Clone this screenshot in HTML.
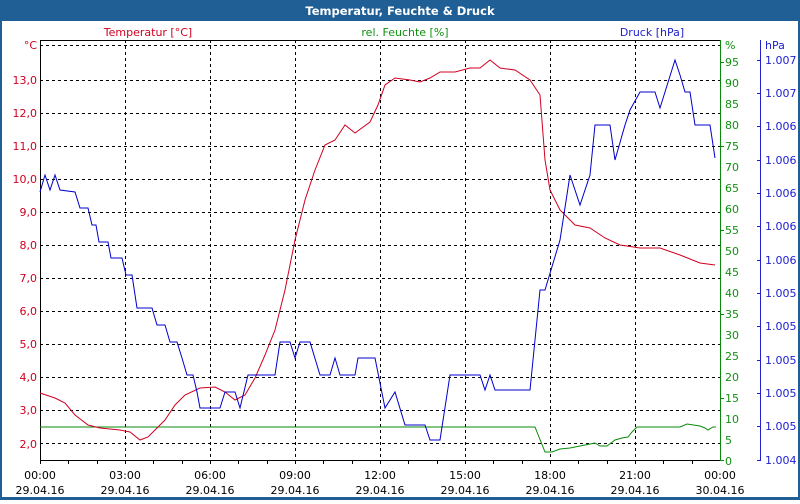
<!DOCTYPE html>
<html><head><meta charset="utf-8"><style>
html,body{margin:0;padding:0;background:#fff;}
body{width:800px;height:500px;overflow:hidden;font-family:"DejaVu Sans","Liberation Sans",sans-serif;}
</style></head><body>
<svg width="800" height="500" xmlns="http://www.w3.org/2000/svg" font-family="DejaVu Sans, Liberation Sans, sans-serif" font-size="11">
<rect x="0" y="0" width="800" height="500" fill="#1f5f96"/>
<rect x="2" y="21" width="796" height="476" fill="#fff"/>
<text x="400" y="15" fill="#fff" font-weight="bold" font-size="11.5" text-anchor="middle">Temperatur, Feuchte &amp; Druck</text>
<text x="148" y="36" fill="#d00020" text-anchor="middle">Temperatur [°C]</text>
<text x="405" y="36" fill="#109010" text-anchor="middle">rel. Feuchte [%]</text>
<text x="652" y="36" fill="#2020d0" text-anchor="middle">Druck [hPa]</text>
<g stroke="#000" stroke-dasharray="3,3" stroke-width="1">
<line x1="40" y1="45.5" x2="720" y2="45.5"/>
<line x1="40" y1="80.5" x2="720" y2="80.5"/><line x1="40" y1="113.5" x2="720" y2="113.5"/>
<line x1="40" y1="146.5" x2="720" y2="146.5"/><line x1="40" y1="179.5" x2="720" y2="179.5"/>
<line x1="40" y1="212.5" x2="720" y2="212.5"/><line x1="40" y1="245.5" x2="720" y2="245.5"/>
<line x1="40" y1="278.5" x2="720" y2="278.5"/><line x1="40" y1="311.5" x2="720" y2="311.5"/>
<line x1="40" y1="344.5" x2="720" y2="344.5"/><line x1="40" y1="377.5" x2="720" y2="377.5"/>
<line x1="40" y1="410.5" x2="720" y2="410.5"/><line x1="40" y1="443.5" x2="720" y2="443.5"/>
<line x1="125.5" y1="40" x2="125.5" y2="460"/><line x1="210.5" y1="40" x2="210.5" y2="460"/>
<line x1="295.5" y1="40" x2="295.5" y2="460"/><line x1="380.5" y1="40" x2="380.5" y2="460"/>
<line x1="465.5" y1="40" x2="465.5" y2="460"/><line x1="550.5" y1="40" x2="550.5" y2="460"/>
<line x1="635.5" y1="40" x2="635.5" y2="460"/>
</g>
<line x1="40" y1="40.5" x2="720" y2="40.5" stroke="#000"/>
<line x1="40.5" y1="40" x2="40.5" y2="464" stroke="#000"/>
<line x1="40" y1="460.5" x2="720" y2="460.5" stroke="#000"/>
<g stroke="#000">
<line x1="68.5" y1="460" x2="68.5" y2="464"/><line x1="97.5" y1="460" x2="97.5" y2="464"/><line x1="125.5" y1="460" x2="125.5" y2="464"/>
<line x1="153.5" y1="460" x2="153.5" y2="464"/><line x1="182.5" y1="460" x2="182.5" y2="464"/><line x1="210.5" y1="460" x2="210.5" y2="464"/>
<line x1="238.5" y1="460" x2="238.5" y2="464"/><line x1="267.5" y1="460" x2="267.5" y2="464"/><line x1="295.5" y1="460" x2="295.5" y2="464"/>
<line x1="323.5" y1="460" x2="323.5" y2="464"/><line x1="352.5" y1="460" x2="352.5" y2="464"/><line x1="380.5" y1="460" x2="380.5" y2="464"/>
<line x1="408.5" y1="460" x2="408.5" y2="464"/><line x1="437.5" y1="460" x2="437.5" y2="464"/><line x1="465.5" y1="460" x2="465.5" y2="464"/>
<line x1="493.5" y1="460" x2="493.5" y2="464"/><line x1="522.5" y1="460" x2="522.5" y2="464"/><line x1="550.5" y1="460" x2="550.5" y2="464"/>
<line x1="578.5" y1="460" x2="578.5" y2="464"/><line x1="607.5" y1="460" x2="607.5" y2="464"/><line x1="635.5" y1="460" x2="635.5" y2="464"/>
<line x1="663.5" y1="460" x2="663.5" y2="464"/><line x1="692.5" y1="460" x2="692.5" y2="464"/>
</g>
<line x1="720.5" y1="40" x2="720.5" y2="461" stroke="#0a8a0a"/>
<line x1="760.5" y1="40" x2="760.5" y2="461" stroke="#2020d0"/>
<g fill="#d00020" text-anchor="end" font-size="11">
<text x="37" y="49">°C</text>
<text x="37" y="84">13,0</text><text x="37" y="117">12,0</text><text x="37" y="150">11,0</text>
<text x="37" y="183">10,0</text><text x="37" y="216">9,0</text><text x="37" y="249">8,0</text>
<text x="37" y="282">7,0</text><text x="37" y="315">6,0</text><text x="37" y="348">5,0</text>
<text x="37" y="381">4,0</text><text x="37" y="414">3,0</text><text x="37" y="448">2,0</text>
</g>
<g fill="#109010" font-size="11">
<text x="725" y="49">%</text>
<text x="725" y="66">95</text><text x="725" y="87">90</text><text x="725" y="108">85</text><text x="725" y="129">80</text>
<text x="725" y="150">75</text><text x="725" y="171">70</text><text x="725" y="192">65</text><text x="725" y="213">60</text>
<text x="725" y="234">55</text><text x="725" y="255">50</text><text x="725" y="276">45</text><text x="725" y="297">40</text>
<text x="725" y="318">35</text><text x="725" y="339">30</text><text x="725" y="360">25</text><text x="725" y="381">20</text>
<text x="725" y="402">15</text><text x="725" y="423">10</text><text x="725" y="444">5</text><text x="725" y="465">0</text>
</g>
<g stroke="#0a8a0a">
<line x1="720" y1="62.5" x2="724" y2="62.5"/><line x1="720" y1="146.5" x2="724" y2="146.5"/><line x1="720" y1="230.5" x2="724" y2="230.5"/>
<line x1="720" y1="314.5" x2="724" y2="314.5"/><line x1="720" y1="398.5" x2="724" y2="398.5"/><line x1="720" y1="460.5" x2="724" y2="460.5"/>
</g>
<g fill="#2020d0" font-size="11">
<text x="765" y="49">hPa</text>
<text x="765" y="64">1.007</text><text x="765" y="97">1.007</text><text x="765" y="130">1.006</text>
<text x="765" y="164">1.006</text><text x="765" y="197">1.006</text><text x="765" y="230">1.006</text>
<text x="765" y="264">1.006</text><text x="765" y="297">1.005</text><text x="765" y="330">1.005</text>
<text x="765" y="364">1.005</text><text x="765" y="397">1.005</text><text x="765" y="430">1.005</text><text x="765" y="464">1.004</text>
</g>
<g stroke="#2020d0">
<line x1="757" y1="60.5" x2="760" y2="60.5"/><line x1="757" y1="93.5" x2="760" y2="93.5"/><line x1="757" y1="126.5" x2="760" y2="126.5"/>
<line x1="757" y1="160.5" x2="760" y2="160.5"/><line x1="757" y1="193.5" x2="760" y2="193.5"/><line x1="757" y1="226.5" x2="760" y2="226.5"/>
<line x1="757" y1="260.5" x2="760" y2="260.5"/><line x1="757" y1="293.5" x2="760" y2="293.5"/><line x1="757" y1="326.5" x2="760" y2="326.5"/>
<line x1="757" y1="360.5" x2="760" y2="360.5"/><line x1="757" y1="393.5" x2="760" y2="393.5"/><line x1="757" y1="426.5" x2="760" y2="426.5"/><line x1="757" y1="460.5" x2="760" y2="460.5"/>
</g>
<g fill="#000" text-anchor="middle" font-size="11">
<text x="40" y="479">00:00</text><text x="40" y="494">29.04.16</text>
<text x="125" y="479">03:00</text><text x="125" y="494">29.04.16</text>
<text x="210" y="479">06:00</text><text x="210" y="494">29.04.16</text>
<text x="295" y="479">09:00</text><text x="295" y="494">29.04.16</text>
<text x="380" y="479">12:00</text><text x="380" y="494">29.04.16</text>
<text x="465" y="479">15:00</text><text x="465" y="494">29.04.16</text>
<text x="550" y="479">18:00</text><text x="550" y="494">29.04.16</text>
<text x="635" y="479">21:00</text><text x="635" y="494">29.04.16</text>
<text x="720" y="479">00:00</text><text x="720" y="494">30.04.16</text>
</g>
<polyline fill="none" stroke="#0a8a0a" points="40,427 535,427 545,452 552,452 560,449 570,448 580,446 590,444 595,443 600,446 607,446 615,440 622,438 628,437 632,432 637,427 680,427 687,424 700,426 705,428 708,430 713,427 716,427"/>
<polyline fill="none" stroke="#d00020" points="40,393 55,398 65,403 75,415 88,425 100,428 120,430 130,432 140,440 148,437 155,430 165,420 175,405 185,395 200,388 215,387 225,392 235,400 245,395 255,378 265,355 275,330 285,290 295,240 305,200 315,170 325,145 335,140 345,125 355,133 370,122 378,105 385,85 395,78 410,80 420,82 430,78 440,72 455,72 470,68 480,68 490,60 500,68 515,70 530,80 540,95 545,160 550,190 560,210 575,225 590,228 605,238 620,245 640,248 660,248 680,255 700,263 715,265"/>
<polyline fill="none" stroke="#0000cc" points="40,192 45,175 50,190 55,175 60,190 75,192 80,208 88,208 92,225 96,225 99,242 108,242 111,258 122,258 126,275 132,275 137,308 152,308 157,325 165,325 170,342 177,342 182,358 187,375 193,375 197,392 200,408 220,408 225,392 235,392 240,408 248,375 275,375 280,342 290,342 295,358 300,342 310,342 320,375 330,375 335,358 340,375 355,375 358,358 375,358 385,408 395,392 405,425 425,425 430,440 440,440 450,375 480,375 485,390 490,375 495,390 530,390 540,290 545,290 560,240 570,175 580,205 590,175 595,125 610,125 615,160 625,125 630,110 640,92 655,92 660,108 665,92 675,60 680,75 685,92 690,92 695,125 710,125 715,158"/>
</svg>
</body></html>
